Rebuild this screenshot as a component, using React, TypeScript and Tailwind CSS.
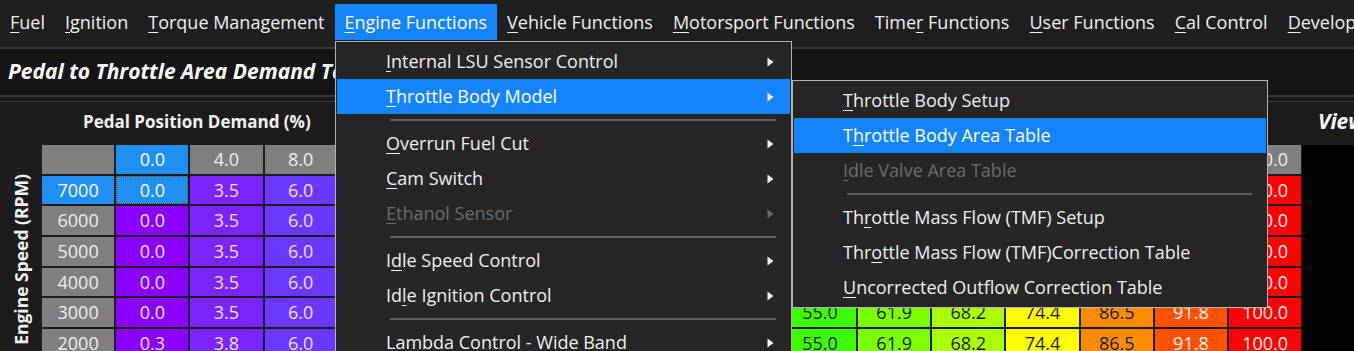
import React from 'react';

type MenuEntry =
  | { kind: 'item'; text: string; at: number; sub?: boolean; active?: boolean; disabled?: boolean }
  | { kind: 'sep' };

const topMenu: [string, number][] = [
  ['Fuel', 0],
  ['Ignition', 0],
  ['Torque Management', 0],
  ['Engine Functions', 0],
  ['Vehicle Functions', 0],
  ['Motorsport Functions', 0],
  ['Timer Functions', 4],
  ['User Functions', 0],
  ['Cal Control', 0],
  ['Developer', 0],
];

const engineMenu: MenuEntry[] = [
  { kind: 'item', text: 'Internal LSU Sensor Control', at: 0, sub: true },
  { kind: 'item', text: 'Throttle Body Model', at: 0, sub: true, active: true },
  { kind: 'sep' },
  { kind: 'item', text: 'Overrun Fuel Cut', at: 0, sub: true },
  { kind: 'item', text: 'Cam Switch', at: 0, sub: true },
  { kind: 'item', text: 'Ethanol Sensor', at: 0, sub: true, disabled: true },
  { kind: 'sep' },
  { kind: 'item', text: 'Idle Speed Control', at: 1, sub: true },
  { kind: 'item', text: 'Idle Ignition Control', at: 2, sub: true },
  { kind: 'sep' },
  { kind: 'item', text: 'Lambda Control - Wide Band', at: -1, sub: true },
];

const throttleMenu: MenuEntry[] = [
  { kind: 'item', text: 'Throttle Body Setup', at: 0 },
  { kind: 'item', text: 'Throttle Body Area Table', at: 1, active: true },
  { kind: 'item', text: 'Idle Valve Area Table', at: 0, disabled: true },
  { kind: 'sep' },
  { kind: 'item', text: 'Throttle Mass Flow (TMF) Setup', at: 2 },
  { kind: 'item', text: 'Throttle Mass Flow (TMF)Correction Table', at: 3 },
  { kind: 'item', text: 'Uncorrected Outflow Correction Table', at: 0 },
];

const pedal = ['0.0', '4.0', '8.0', '12.0', '16.0', '20.0', '25.0', '30.0', '40.0', '50.0', '60.0', '70.0', '80.0', '90.0', '95.0', '100.0'];
const rpm = ['7000', '6000', '5000', '4000', '3000', '2000', '1000'];
const baseRow = ['0.0', '3.5', '6.0', '9.2', '12.8', '17.0', '22.4', '28.1', '40.2', '55.0', '61.9', '68.2', '74.4', '86.5', '91.8', '100.0'];
const lowRow = ['0.3', '3.8', '6.0', '9.2', '12.8', '17.0', '22.4', '28.1', '40.2', '55.0', '61.9', '68.2', '74.4', '86.5', '91.8', '100.0'];

// cell colour per column, purple -> green -> red
const colBg = [
  'bg-[#8a00ff]', 'bg-[#7b24ff]', 'bg-[#6a38ff]', 'bg-[#4a5cff]', 'bg-[#2a80ff]', 'bg-[#00b0ff]', 'bg-[#00e0d0]', 'bg-[#00ff80]',
  'bg-[#20ff40]', 'bg-[#3cff00]', 'bg-[#7cff00]', 'bg-[#aaff00]', 'bg-[#ffff00]', 'bg-[#ff8c00]', 'bg-[#ff5200]', 'bg-[#ff0000]',
];
const colText = (c: number) => (c < 3 ? 'text-[#eee0ff]' : c >= 14 ? 'text-[#fff4f0]' : 'text-[#1c1c1c]');

function Mn({ text, at }: { text: string; at: number }) {
  if (at < 0) return <span>{text}</span>;
  return (
    <span className="whitespace-pre">
      {text.slice(0, at)}
      <span className="underline decoration-1 underline-offset-[3px]">{text[at]}</span>
      {text.slice(at + 1)}
    </span>
  );
}

function Arrow({ disabled }: { disabled?: boolean }) {
  return (
    <svg width="7" height="10" viewBox="0 0 7 10" className="shrink-0">
      <path d="M0.5 0.5 L6.5 5 L0.5 9.5 Z" fill={disabled ? '#6a6a6a' : '#f2f2f2'} />
    </svg>
  );
}

function DropMenu({ entries, className }: { entries: MenuEntry[]; className: string }) {
  return (
    <div className={`absolute bg-[#262626] border border-[#b4b4b4] pt-[2px] pb-[2px] ${className}`}>
      {entries.map((e, i) =>
        e.kind === 'sep' ? (
          <div key={i} className="h-[12px] flex items-center pl-[54px] pr-[15px]">
            <div className="h-[2px] w-full bg-[#5e5e5e]" />
          </div>
        ) : (
          <div
            key={i}
            className={`h-[35px] mx-[1px] flex items-center pl-[49px] pr-[16px] text-[18px] ${
              e.active ? 'bg-[#1585ff] text-white' : e.disabled ? 'text-[#6c6c6c]' : 'text-[#f0f0f0]'
            }`}
          >
            <span className="flex-1 whitespace-nowrap">
              <Mn text={e.text} at={e.at} />
            </span>
            {e.sub && <Arrow disabled={e.disabled} />}
          </div>
        )
      )}
    </div>
  );
}

function MenuBar() {
  return (
    <div className="h-[47px] bg-[#1f1f1f] flex items-start pt-[4px] overflow-hidden">
      {topMenu.map(([t, at]) => (
        <div
          key={t}
          className={`h-[36px] px-[10px] flex items-center text-[18px] whitespace-nowrap shrink-0 ${
            t === 'Engine Functions' ? 'bg-[#1585ff] text-white' : 'text-[#f0f0f0]'
          }`}
        >
          <Mn text={t} at={at} />
        </div>
      ))}
    </div>
  );
}

function Table() {
  return (
    <div className="grid grid-cols-[repeat(17,72.2px)] auto-rows-[28.7px] gap-[2px] text-[18px]">
      <div className="bg-[#7f7f7f]" />
      {pedal.map((p, c) => (
        <div
          key={p}
          className={`flex items-center justify-center ${c === 0 ? 'bg-[#2090f5] text-white' : 'bg-[#7f7f7f] text-[#eeeeee]'}`}
        >
          {p}
        </div>
      ))}
      {rpm.map((r, ri) => {
        const vals = r === '2000' || r === '1000' ? lowRow : baseRow;
        return (
          <React.Fragment key={r}>
            <div
              className={`flex items-center justify-center ${ri === 0 ? 'bg-[#2090f5] text-white' : 'bg-[#7f7f7f] text-[#eeeeee]'}`}
            >
              {r}
            </div>
            {vals.map((v, c) =>
              ri === 0 && c === 0 ? (
                <div
                  key={c}
                  className="flex items-center justify-center bg-[#2090f5] text-white outline-1 outline-dotted outline-[#7a4a10] -outline-offset-1"
                >
                  {v}
                </div>
              ) : (
                <div key={c} className={`flex items-center justify-center ${colBg[c]} ${colText(c)}`}>
                  {v}
                </div>
              )
            )}
          </React.Fragment>
        );
      })}
    </div>
  );
}

export default function App() {
  return (
    <div className="relative w-[1354px] h-[351px] overflow-hidden bg-[#1c1c1c] text-[#f0f0f0] font-['Open_Sans','Noto_Sans',sans-serif]">
      <MenuBar />
      <div className="h-[50px] bg-[#151515] border-t-2 border-b-2 border-[#3a3a3a] flex items-center pl-[8px]">
        <span className="text-[21px] font-bold italic text-white whitespace-nowrap">Pedal to Throttle Area Demand Table</span>
      </div>
      <div className="h-[4px] bg-[#1a1a1a]" />
      <div className="flex border-t border-[#3a3a3a]">
        <div className="w-[1302px] flex flex-col shrink-0">
          <div className="h-[43px] flex items-center pl-[83px] pb-[4px]">
            <span className="text-[17px] font-bold text-[#f2f2f2]">Pedal Position Demand (%)</span>
          </div>
          <div className="flex">
            <div className="w-[42px] h-[228px] flex items-center justify-center">
              <span className="[writing-mode:vertical-rl] rotate-180 text-[17.5px] font-bold whitespace-nowrap text-[#f2f2f2]">
                Engine Speed (RPM)
              </span>
            </div>
            <Table />
          </div>
        </div>
        <div className="flex-1 flex flex-col">
          <div className="h-[43px] flex items-center pl-[16px] pb-[4px]">
            <span className="text-[21px] font-bold italic text-white whitespace-nowrap">View</span>
          </div>
          <div className="flex-1 bg-black h-[220px]" />
        </div>
      </div>

      <DropMenu entries={engineMenu} className="left-[335px] top-[41px] w-[457px] h-[330px]" />
      <DropMenu entries={throttleMenu} className="left-[792px] top-[80px] w-[476px]" />
    </div>
  );
}
